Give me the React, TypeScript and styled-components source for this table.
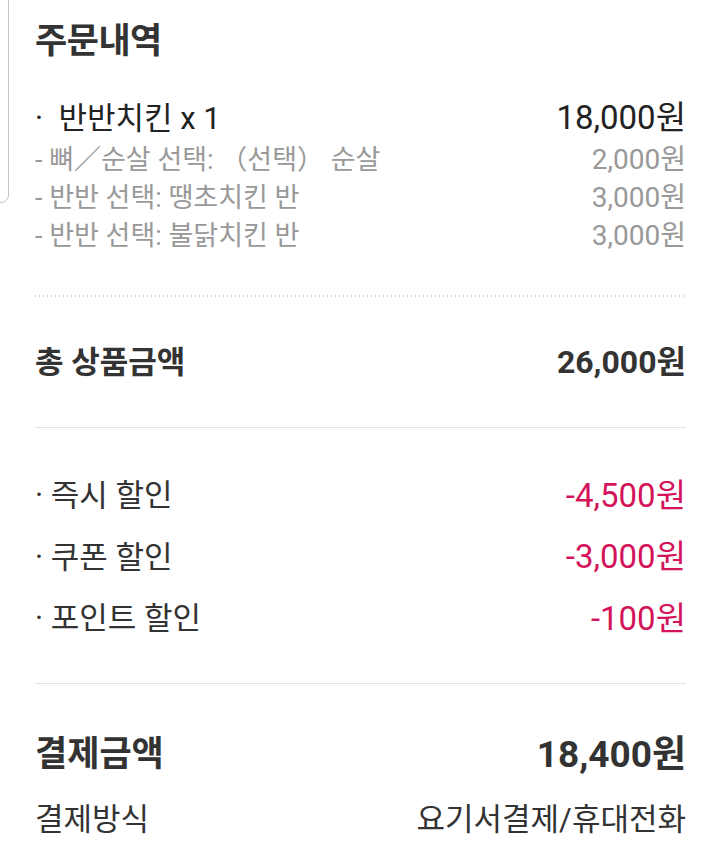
import React from "react";
import styled, { createGlobalStyle } from "styled-components";

const GlobalStyle = createGlobalStyle`
  html, body { margin: 0; padding: 0; background: #fff; }
  body {
    font-family: Roboto, "Noto Sans CJK KR", "Noto Sans", sans-serif;
    color: #222;
    -webkit-font-smoothing: antialiased;
  }
`;

const Page = styled.div`
  position: relative;
  width: 720px;
  min-height: 856px;
  overflow: hidden;
  padding: 21px 34px 0 35px;
  box-sizing: border-box;
  display: flex;
  flex-direction: column;
`;

const EdgePanel = styled.div`
  position: absolute;
  left: -20px;
  top: -10px;
  width: 29px;
  height: 213px;
  border: 1px solid #c4c4c4;
  border-radius: 0 0 8px 0;
  box-sizing: border-box;
`;

const Title = styled.h1`
  margin: 0;
  font-size: 35px;
  line-height: 42px;
  font-weight: 700;
  color: #333;
  letter-spacing: -0.5px;
`;

const Row = styled.div<{
  $h: number;
  $size: number;
  $valueSize?: number;
  $weight?: number;
  $color?: string;
  $valueColor?: string;
}>`
  display: flex;
  justify-content: space-between;
  align-items: center;
  height: ${(p) => p.$h}px;
  font-size: ${(p) => p.$size}px;
  font-weight: ${(p) => p.$weight ?? 400};
  color: ${(p) => p.$color ?? "#222"};
  white-space: nowrap;
  & > span:last-child {
    color: ${(p) => p.$valueColor ?? "inherit"};
    font-size: ${(p) => p.$valueSize ?? p.$size}px;
  }
`;

const ItemBlock = styled.div`
  margin-top: 29px;
  display: flex;
  flex-direction: column;
`;

const DottedDivider = styled.div`
  margin-top: 43px;
  height: 2px;
  background: repeating-linear-gradient(to right, #d0d0d0 0 1px, transparent 1px 4px);
`;

const Divider = styled.div<{ $top: number }>`
  margin-top: ${(p) => p.$top}px;
  height: 1px;
  background: #e3e3e3;
`;

const Section = styled.div<{ $top: number }>`
  margin-top: ${(p) => p.$top}px;
  display: flex;
  flex-direction: column;
`;

const Label = styled.span``;
const Value = styled.span``;

const subs: [string, string][] = [
  ["- 뼈／순살 선택: （선택） 순살", "2,000원"],
  ["- 반반 선택: 땡초치킨 반", "3,000원"],
  ["- 반반 선택: 불닭치킨 반", "3,000원"],
];

const discounts: [string, string][] = [
  ["· 즉시 할인", "-4,500원"],
  ["· 쿠폰 할인", "-3,000원"],
  ["· 포인트 할인", "-100원"],
];

export default function App() {
  return (
    <>
      <GlobalStyle />
      <Page>
        <EdgePanel />
        <Title>주문내역</Title>
        <ItemBlock>
          <Row $h={46} $size={31} $valueSize={33} $color="#222">
            <Label>·&nbsp;&nbsp;반반치킨 x 1</Label>
            <Value>18,000원</Value>
          </Row>
          {subs.map(([l, v]) => (
            <Row key={l} $h={38} $size={27} $valueSize={28} $color="#999">
              <Label>{l}</Label>
              <Value>{v}</Value>
            </Row>
          ))}
        </ItemBlock>
        <DottedDivider />
        <Section $top={42}>
          <Row $h={40} $size={31} $valueSize={32} $weight={700} $color="#333">
            <Label>총 상품금액</Label>
            <Value>26,000원</Value>
          </Row>
        </Section>
        <Divider $top={48} />
        <Section $top={34}>
          {discounts.map(([l, v]) => (
            <Row key={l} $h={61.5} $size={31} $valueSize={33} $color="#333" $valueColor="#d4145a">
              <Label>{l}</Label>
              <Value>{v}</Value>
            </Row>
          ))}
        </Section>
        <Divider $top={36} />
        <Section $top={45}>
          <Row $h={44} $size={35} $valueSize={37} $weight={700} $color="#333">
            <Label>결제금액</Label>
            <Value>18,400원</Value>
          </Row>
          <Row $h={44} $size={31} $color="#333" style={{ marginTop: 22 }}>
            <Label>결제방식</Label>
            <Value>요기서결제/휴대전화</Value>
          </Row>
        </Section>
      </Page>
    </>
  );
}
